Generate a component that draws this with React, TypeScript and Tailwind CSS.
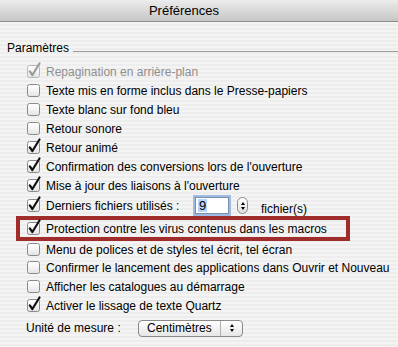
import React from 'react';

const font = { fontFamily: '"Liberation Sans", Arial, sans-serif' };

function Box({ checked, disabled }: { checked?: boolean; disabled?: boolean }) {
  const stroke = disabled ? '#b8b8b8' : '#8a8a8a';
  const mark = disabled ? '#9a9a9a' : '#111';
  return (
    <svg width="13" height="13" viewBox="0 0 13 13" className="shrink-0 overflow-visible">
      <defs>
        <linearGradient id="cbg" x1="0" y1="0" x2="0" y2="1">
          <stop offset="0" stopColor="#ffffff" />
          <stop offset="0.5" stopColor="#f4f4f4" />
          <stop offset="1" stopColor="#e2e2e2" />
        </linearGradient>
      </defs>
      <rect x="0.5" y="0.5" width="12" height="12" rx="2" fill="url(#cbg)" stroke={stroke} />
      {checked && (
        <path d="M2.8 6.3 L5.4 10 L12.5 -1.5" fill="none" stroke={mark} strokeWidth="2.2" strokeLinecap="round" strokeLinejoin="round" />
      )}
    </svg>
  );
}

function Row({ label, checked, disabled, h = 'h-[19px]' }: { label: string; checked?: boolean; disabled?: boolean; h?: string }) {
  return (
    <div className={`flex items-center gap-[6px] whitespace-nowrap ${h}`}>
      <Box checked={checked} disabled={disabled} />
      <span className={disabled ? 'text-[#8e8e8e]' : 'text-black'}>{label}</span>
    </div>
  );
}

export default function App() {
  return (
    <div
      className="w-[398px] h-[347px] overflow-hidden text-[12px] leading-none"
      style={{ ...font, background: 'repeating-linear-gradient(to bottom, #ededed 0px, #ededed 2px, #f4f4f4 2px, #f4f4f4 4px)' }}
    >
      <div className="h-[22px] border-b border-[#8c8c8c] bg-gradient-to-b from-[#ececec] to-[#c6c6c6] flex items-center justify-center pr-[30px] text-[13px] text-black">
        Préférences
      </div>

      <div className="mt-[19px] h-[14px] flex items-center pl-[7px] gap-[4px]">
        <span>Paramètres</span>
        <div className="flex-1 h-px bg-[#9c9c9c] mt-[6px]" />
      </div>

      <div className="mt-[7px] pl-[27px]">
        <Row label="Repagination en arrière-plan" checked disabled />
        <Row label="Texte mis en forme inclus dans le Presse-papiers" />
        <Row label="Texte blanc sur fond bleu" />
        <Row label="Retour sonore" />
        <Row label="Retour animé" checked />
        <Row label="Confirmation des conversions lors de l'ouverture" checked />
        <Row label="Mise à jour des liaisons à l'ouverture" checked />

        <div className="flex items-center h-[21px] whitespace-nowrap">
          <div className="flex items-center gap-[6px] w-[168px]">
            <Box checked />
            <span>Derniers fichiers utilisés :</span>
          </div>
          <div className="w-[34px] h-[17px] bg-white border border-[#7a8ea8] shadow-[0_0_0_2px_#9dbbe3] flex items-center pl-[2px]">
            <span className="bg-[#b5d5ff] px-px text-[13px]">9</span>
          </div>
          <div className="ml-[8px] w-[11px] h-[17px] rounded-full border border-[#8a8a8a] bg-gradient-to-b from-white to-[#e0e0e0] flex flex-col items-center justify-center gap-[2px]">
            <div className="w-0 h-0 border-x-[2.5px] border-x-transparent border-b-[3px] border-b-black" />
            <div className="w-0 h-0 border-x-[2.5px] border-x-transparent border-t-[3px] border-t-black" />
          </div>
          <span className="ml-[13px] mt-[6px]">fichier(s)</span>
        </div>

        <div className="-ml-[11px] w-[334px] h-[25px] border-[4px] border-[#a02c2c] pl-[7px] flex items-center">
          <Row label="Protection contre les virus contenus dans les macros" checked h="h-[17px]" />
        </div>

        <Row label="Menu de polices et de styles tel écrit, tel écran" h="h-[17px]" />
        <Row label="Confirmer le lancement des applications dans Ouvrir et Nouveau" />
        <Row label="Afficher les catalogues au démarrage" />
        <Row label="Activer le lissage de texte Quartz" checked />

        <div className="flex items-center h-[26px] -ml-px whitespace-nowrap">
          <span className="w-[112px]">Unité de mesure :</span>
          <div className="w-[105px] h-[17px] rounded-[4px] border border-[#8a8a8a] bg-gradient-to-b from-white to-[#e6e6e6] flex items-stretch">
            <span className="flex-1 flex items-center pl-[8px]">Centimètres</span>
            <div className="w-[22px] border-l border-[#b0b0b0] flex flex-col items-center justify-center gap-[2px]">
              <div className="w-0 h-0 border-x-[2.5px] border-x-transparent border-b-[3px] border-b-black" />
              <div className="w-0 h-0 border-x-[2.5px] border-x-transparent border-t-[3px] border-t-black" />
            </div>
          </div>
        </div>
      </div>
    </div>
  );
}
